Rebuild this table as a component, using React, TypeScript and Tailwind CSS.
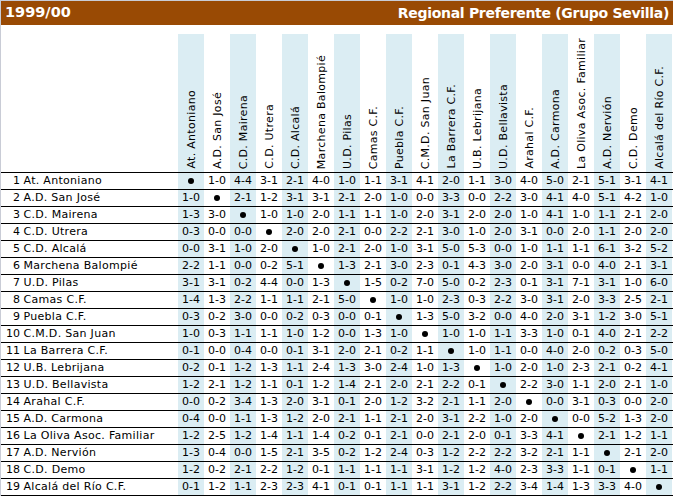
import React from "react";

const teams = [
  "At. Antoniano", "A.D. San José", "C.D. Mairena", "C.D. Utrera", "C.D. Alcalá",
  "Marchena Balompié", "U.D. Pilas", "Camas C.F.", "Puebla C.F.", "C.M.D. San Juan",
  "La Barrera C.F.", "U.B. Lebrijana", "U.D. Bellavista", "Arahal C.F.", "A.D. Carmona",
  "La Oliva Asoc. Familiar", "A.D. Nervión", "C.D. Demo", "Alcalá del Río C.F.",
];

// "x" marks the team's own cell
const results = [
  "x 1-0 4-4 3-1 2-1 4-0 1-0 1-1 3-1 4-1 2-0 1-1 3-0 4-0 5-0 2-1 5-1 3-1 4-1",
  "1-0 x 2-1 1-2 3-1 3-1 2-1 2-0 1-0 0-0 3-3 0-0 2-2 3-0 4-1 4-0 5-1 4-2 1-0",
  "1-3 3-0 x 1-0 1-0 2-0 1-1 1-1 1-0 2-0 3-1 2-0 2-0 1-0 4-1 1-0 1-1 2-1 2-0",
  "0-3 0-0 0-0 x 2-0 2-0 2-1 0-0 2-2 2-1 3-0 1-0 2-0 3-1 0-0 2-0 1-1 2-0 2-0",
  "0-0 3-1 1-0 2-0 x 1-0 2-1 2-0 1-0 3-1 5-0 5-3 0-0 1-0 1-1 1-1 6-1 3-2 5-2",
  "2-2 1-1 0-0 0-2 5-1 x 1-3 2-1 3-0 2-3 0-1 4-3 3-0 2-0 3-1 0-0 4-0 2-1 3-1",
  "3-1 3-1 0-2 4-4 0-0 1-3 x 1-5 0-2 7-0 5-0 0-2 2-3 0-1 3-1 7-1 3-1 1-0 6-0",
  "1-4 1-3 2-2 1-1 1-1 2-1 5-0 x 1-0 1-0 2-3 0-3 2-2 3-0 3-1 2-0 3-3 2-5 2-1",
  "0-3 0-2 3-0 0-0 0-2 0-3 0-0 0-1 x 1-3 5-0 3-2 0-0 4-0 2-0 3-1 1-2 3-0 5-1",
  "1-0 0-3 1-1 1-1 1-0 1-2 0-0 1-3 1-0 x 1-0 1-0 1-1 3-3 1-0 0-1 4-0 2-1 2-2",
  "0-1 0-0 0-4 0-0 0-1 3-1 2-0 2-1 0-2 1-1 x 1-0 1-1 0-0 4-0 2-0 0-2 0-3 5-0",
  "0-2 0-1 1-2 1-3 1-1 2-4 1-3 3-0 2-4 1-0 1-3 x 1-0 2-0 1-0 2-3 2-1 0-2 4-1",
  "1-2 2-1 1-2 1-1 0-1 1-2 1-4 2-1 2-0 2-1 2-2 0-1 x 2-2 3-0 1-1 2-0 2-1 1-0",
  "0-0 0-2 3-4 1-3 2-0 3-1 0-1 2-0 1-2 3-2 2-1 1-1 2-0 x 0-0 3-1 0-3 0-0 2-0",
  "0-4 0-0 1-1 1-3 1-2 2-0 2-1 1-1 2-1 2-0 3-1 2-2 1-0 2-0 x 0-0 5-2 1-3 2-0",
  "1-2 2-5 1-2 1-4 1-1 1-4 0-2 0-1 2-1 0-0 2-1 2-0 0-1 3-3 4-1 x 2-1 1-2 1-1",
  "1-3 0-4 0-0 1-5 2-1 3-5 0-2 1-2 2-4 0-3 1-2 2-2 2-2 3-2 2-1 1-1 x 2-1 2-0",
  "1-2 0-2 2-1 2-2 1-2 0-1 1-1 1-1 1-1 3-1 1-2 1-2 4-0 2-3 3-3 1-1 0-1 x 1-1",
  "0-1 1-2 1-1 2-3 2-3 4-1 0-1 0-1 1-1 1-1 3-1 1-2 2-2 3-4 1-4 1-3 3-3 4-0 x",
].map((r) => r.split(" "));

const band = (j: number) => (j % 2 === 0 ? "bg-[#dbedf3]" : "bg-white");

export default function App() {
  return (
    <div className="w-[673px] h-[496px] overflow-hidden bg-white border-l border-t border-[#c9ccd6] font-['DejaVu_Sans',Verdana,sans-serif] text-[11px] text-black">
      <div className="h-[24px] bg-[#994a04] text-white font-bold flex items-center justify-between pl-[4px] pr-[4px]">
        <span className="text-[14.5px]">1999/00</span>
        <span className="text-[14px] tracking-[-0.3px]">Regional Preferente (Grupo Sevilla)</span>
      </div>

      <div className="grid grid-cols-[177px_repeat(19,26px)] pt-[9px]">
        <div className="h-[138px]" />
        {teams.map((t, j) => (
          <div key={t} className={`h-[138px] flex items-end justify-center pb-[3px] ${band(j)}`}>
            <span className="[writing-mode:vertical-rl] rotate-180 whitespace-nowrap leading-[13px] tracking-[0.3px]">{t}</span>
          </div>
        ))}
      </div>

      {results.map((row, i) => (
        <div key={i} className={`grid grid-cols-[177px_repeat(19,26px)] border-t border-black ${i === results.length - 1 ? "border-b" : ""}`}>
          <div className="h-[16px] leading-[16px] whitespace-nowrap">
            <span className="inline-block w-[19px] text-right">{i + 1}</span>{" "}
            <span className="tracking-[0.3px]">{teams[i]}</span>
          </div>
          {row.map((s, j) => (
            <div key={j} className={`h-[16px] leading-[16px] flex items-center justify-center ${band(j)}`}>
              {s === "x" ? <span className="w-[6px] h-[6px] rounded-full bg-black" /> : s}
            </div>
          ))}
        </div>
      ))}
    </div>
  );
}
